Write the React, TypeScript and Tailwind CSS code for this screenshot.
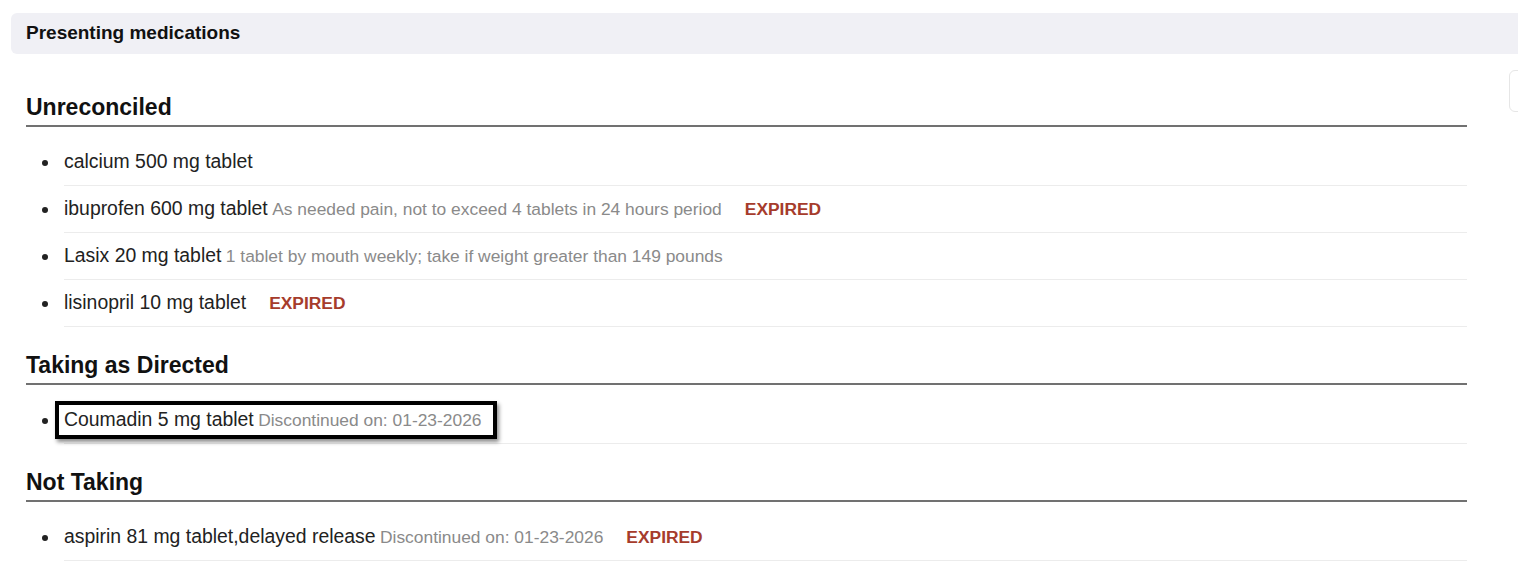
import React from 'react';

type Med = {
  name: string;
  note?: string;
  expired?: boolean;
  highlight?: boolean;
};

const sections: { title: string; meds: Med[] }[] = [
  {
    title: 'Unreconciled',
    meds: [
      { name: 'calcium 500 mg tablet' },
      {
        name: 'ibuprofen 600 mg tablet',
        note: 'As needed pain, not to exceed 4 tablets in 24 hours period',
        expired: true,
      },
      {
        name: 'Lasix 20 mg tablet',
        note: '1 tablet by mouth weekly; take if weight greater than 149 pounds',
      },
      { name: 'lisinopril 10 mg tablet', expired: true },
    ],
  },
  {
    title: 'Taking as Directed',
    meds: [
      {
        name: 'Coumadin 5 mg tablet',
        note: 'Discontinued on: 01-23-2026',
        highlight: true,
      },
    ],
  },
  {
    title: 'Not Taking',
    meds: [
      {
        name: 'aspirin 81 mg tablet,delayed release',
        note: 'Discontinued on: 01-23-2026',
        expired: true,
      },
    ],
  },
];

function MedText({ med }: { med: Med }) {
  const text = (
    <>
      <span className="text-[19.4px] text-[#222]">{med.name}</span>
      {med.note && (
        <>
          {' '}
          <span className="text-[17.4px] text-[#8a8a8a]">{med.note}</span>
        </>
      )}
    </>
  );

  return (
    <div className="whitespace-nowrap leading-[22px]">
      {med.highlight ? (
        <span className="-ml-[9px] inline-block border-4 border-black py-[3px] pl-[5px] pr-[11px] shadow-[2px_3px_4px_rgba(0,0,0,0.45)]">
          {text}
        </span>
      ) : (
        text
      )}
      {med.expired && (
        <span className="ml-[23px] text-[17.4px] font-bold text-[#a63c2c]">EXPIRED</span>
      )}
    </div>
  );
}

export default function App() {
  return (
    <div className="h-[585px] w-[1518px] overflow-hidden bg-white font-['Liberation_Sans',Arial,sans-serif]">
      {/* Header */}
      <div className="flex pl-[11px] pt-[13px]">
        <div className="flex h-[41px] flex-1 items-center rounded-l-md bg-[#f0f0f5] pl-[15px]">
          <span className="text-[19px] font-bold text-[#111]">Presenting medications</span>
        </div>
      </div>

      <div className="flex pl-[26px]">
        {/* Lists */}
        <div className="w-[1441px] shrink-0 pt-[15px]">
          {sections.map((section) => (
            <div key={section.title}>
              <h2 className="mt-[24px] border-b-2 border-[#717171] pb-[4px] text-[23px] font-bold leading-[28px] text-[#111]">
                {section.title}
              </h2>
              <ul className="mt-[12px]">
                {section.meds.map((med) => (
                  <li key={med.name} className="flex">
                    <div className="flex w-[38px] shrink-0 items-center pl-[16px]">
                      <span className="h-[6px] w-[6px] rounded-full bg-[#222]" />
                    </div>
                    <div className="flex h-[47px] flex-1 items-center border-b border-[#ececec]">
                      <MedText med={med} />
                    </div>
                  </li>
                ))}
              </ul>
            </div>
          ))}
        </div>

        {/* Side panel edge */}
        <div className="ml-[42px] mt-[16px] h-[42px] w-[40px] shrink-0 rounded-md border border-[#e6e6e6]" />
      </div>
    </div>
  );
}
